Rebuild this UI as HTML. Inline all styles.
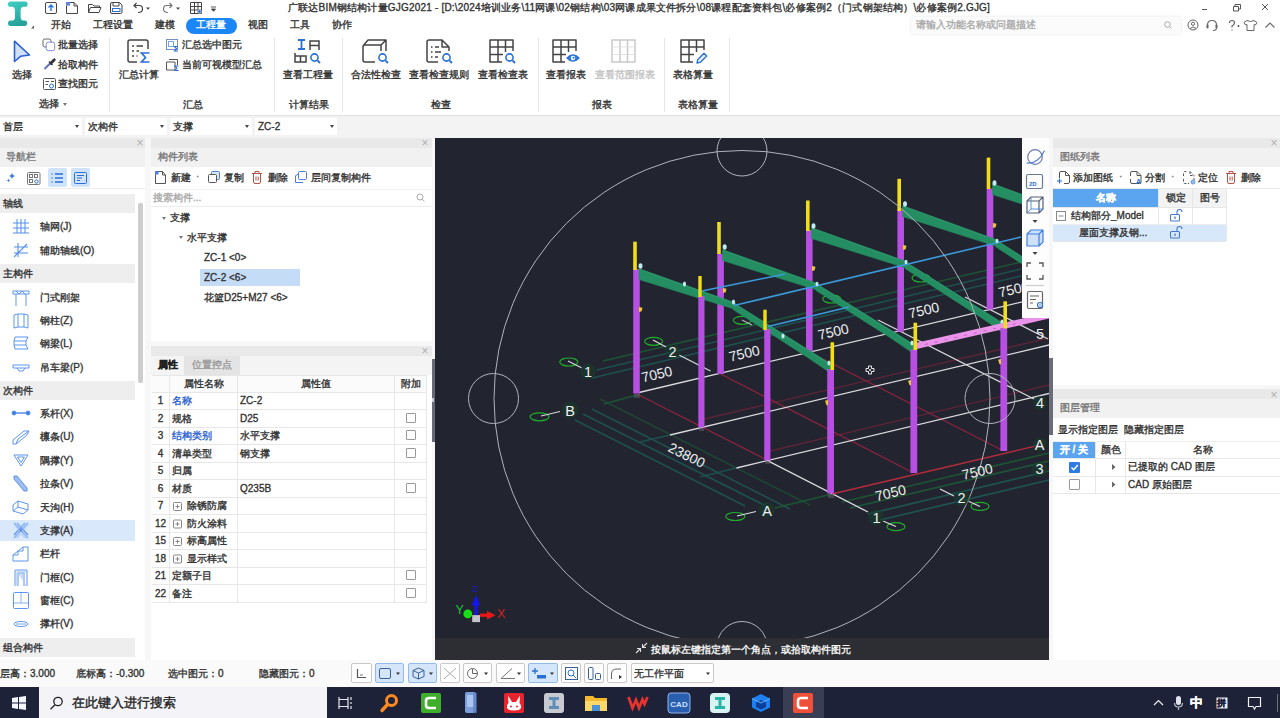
<!DOCTYPE html>
<html lang="zh">
<head>
<meta charset="utf-8">
<title>GJG2021</title>
<style>
html,body{margin:0;padding:0;}
body{width:1280px;height:718px;overflow:hidden;background:#fff;position:relative;font-family:"Liberation Sans",sans-serif;font-size:10px;line-height:12px;color:#333;}
div,span,svg,i,b{position:absolute;box-sizing:border-box;}
.t{white-space:nowrap;height:12px;line-height:12px;font-size:10px;color:#333;font-style:normal;font-weight:normal;-webkit-text-stroke:.35px currentColor;}
.g{color:#777;}
.c{text-align:center;}
.sep{width:1px;background:#e6e6e6;top:38px;height:74px;}
.dd{background:#fff;top:118px;height:17px;width:82px;}
.dd .t{left:3px;top:3px;}
.ar{border:2.5px solid transparent;border-top:3px solid #444;width:0;height:0;}
.hd{background:#e9e9e9;height:10px;}
.tt{background:#f1f1f1;height:19px;}
.x{font-size:12px;color:#b0b0b0;line-height:10px;height:10px;width:8px;text-align:center;}
.sh{left:0;width:135px;height:19px;background:#eeeeee;}
.sh .t{left:3px;top:4px;}
.vl{width:1px;background:#e7e7e7;}
.hl{height:1px;background:#e7e7e7;}
.cb{width:10px;height:10px;border:1px solid #999;background:#fff;border-radius:1px;}
.sb{top:663px;height:20px;border:1px solid #c9c9c9;background:#fff;border-radius:2px;}
.sb.on{background:#d5e6fa;border-color:#8fbcec;}
svg{overflow:visible;}
</style>
</head>
<body>
<!-- ===== TITLE / MENU / RIBBON ===== -->
<div id="top" style="left:0;top:0;width:1280px;height:116px;background:#fff;">
<!-- app logo -->
<svg style="left:6px;top:0" width="30" height="30" viewBox="6 0 30 30">
<defs><linearGradient id="lg" x1="0" y1="0" x2="0.300" y2="1"><stop offset="0" stop-color="#3fd0c4"/><stop offset="1" stop-color="#27a39c"/></linearGradient></defs>
<path d="M10.600 1.600 H25 Q27.600 1.600 27.600 4.200 Q27.600 6.800 25 6.800 H23 Q20.800 7.200 20.600 10 V17 Q20.800 20.200 23 20.600 H24.600 Q27.200 20.600 27.200 23.300 Q27.200 26 24.600 26 H10.600 Q8 26 8 23.300 Q8 20.600 10.600 20.600 H12.600 Q14.800 20.200 15 17 V10 Q14.800 7.200 12.600 6.800 H10.600 Q8 6.800 8 4.200 Q8 1.600 10.600 1.600 Z" fill="url(#lg)"/>
<path d="M31 28.500 L34 25.500 V28.500 Z" fill="#555"/>
</svg>
<!-- quick access -->
<svg style="left:44px;top:1px" width="180" height="14" viewBox="0 0 180 14" fill="none" stroke="#444" stroke-width="1">
<rect x="1.5" y="1.5" width="11" height="11" rx="1.5"/><path d="M7 10 V4 M4.5 6.5 L7 4 L9.5 6.5" stroke="#2a6fd6" stroke-width="1.4"/>
<path d="M22.500 4.500 V12.500 H33.500 V5 L30 1.500 H26 M30 1.500 V5 H33.500"/><rect x="22" y="1" width="4" height="3.600" fill="#5a84e0" stroke="none"/>
<path d="M44.500 11.500 V3.500 H48.500 L50 5 H55.500 V6.500 M44.500 11.500 L46.500 6.500 H57 L55 11.500 Z"/>
<path d="M66.500 3 Q66.500 1.500 68 1.500 H75.500 L78 4 V11 Q78 12.500 76.500 12.500 H68 Q66.500 12.500 66.500 11 Z M69 1.500 V5 H75 V1.500" /><rect x="68.500" y="7.500" width="7.500" height="3" stroke="#2a6fd6"/>
<path d="M90 4.500 H95.500 Q98.500 4.500 98.500 8 Q98.500 11.500 94 11.500 M92.500 2 L90 4.500 L92.500 7" stroke-width="1.200"/>
<path d="M102 6.500 L104 8.800 L106 6.500 Z" fill="#444" stroke="none"/>
<path d="M128 4.500 H122.500 Q119.500 4.500 119.500 8 Q119.500 11.500 124 11.500 M125.500 2 L128 4.500 L125.500 7" stroke="#777" stroke-width="1.200"/>
<path d="M132 6.500 L134 8.800 L136 6.500 Z" fill="#444" stroke="none"/>
<path d="M146.500 1.500 H157.500 V12.500 H146.500 Z M146.500 5.500 H157.500 M146.500 9 H157.500 M150.500 1.500 V12.500 M154 1.500 V12.500"/><circle cx="155.500" cy="10.500" r="1.800" fill="#2a6fd6" stroke="#fff" stroke-width=".6"/>
<path d="M167 6 H172 M167.500 8 L169.500 10.300 L171.500 8 Z" stroke-width=".9" fill="#444"/>
</svg>
<span class="t" style="left:288px;top:2px;color:#333;letter-spacing:.19px">广联达BIM钢结构计量GJG2021 - [D:\2024培训业务\11网课\02钢结构\03网课成果文件拆分\08课程配套资料包\必修案例2（门式钢架结构）\必修案例2.GJG]</span>
<!-- window controls -->
<svg style="left:1195px;top:0" width="85" height="16" viewBox="0 0 85 16" fill="none" stroke="#555" stroke-width="1">
<path d="M7 9.500 H12"/><path d="M38.500 6.500 H43.500 V11 H38.500 Z M40 6.500 V4.500 H45.500 V9 H43.500"/><path d="M67 4 L73 10 M73 4 L67 10"/>
</svg>
<!-- menu -->
<span class="t" style="left:51px;top:19px;font-size:10px">开始</span>
<span class="t" style="left:93px;top:19px;font-size:10px">工程设置</span>
<span class="t" style="left:155px;top:19px;font-size:10px">建模</span>
<div style="left:186px;top:18px;width:51px;height:16px;border-radius:8px;background:#1b86f5;"></div>
<span class="t" style="left:196px;top:19px;font-size:10px;color:#fff">工程量</span>
<span class="t" style="left:248px;top:19px;font-size:10px">视图</span>
<span class="t" style="left:290px;top:19px;font-size:10px">工具</span>
<span class="t" style="left:332px;top:19px;font-size:10px">协作</span>
<!-- search box -->
<div style="left:911px;top:17px;width:270px;height:17px;background:#fbfbfb;box-shadow:0 0 3px #e4e4e4;"></div>
<span class="t" style="left:916px;top:19px;color:#aaa;font-size:9.500px">请输入功能名称或问题描述</span>
<svg style="left:1162px;top:19px" width="118" height="14" viewBox="0 0 118 14" fill="none" stroke="#666" stroke-width="1">
<circle cx="5.500" cy="5.500" r="2.800" stroke="#aaa"/><path d="M7.500 7.500 L9.500 9.500" stroke="#aaa"/>
<circle cx="31" cy="6" r="5"/><circle cx="31" cy="4.800" r="1.600"/><path d="M28 9.500 Q31 6.500 34 9.500"/>
<path d="M45.500 8 V6 Q45.500 1.500 50 1.500 Q54.500 1.500 54.500 6 V8 M54.500 9 Q54.500 11.500 51 11.500" stroke-width="1.100"/><rect x="44.500" y="5.500" width="2" height="4" rx=".8" fill="#666" stroke="none"/><rect x="53.500" y="5.500" width="2" height="4" rx=".8" fill="#666" stroke="none"/>
<path d="M67.500 4 Q67.500 1.500 70 1.500 Q72.500 1.500 72.500 4 Q72.500 5.500 70 7 V8.500 M70 10.500 V11.500" stroke-width="1.200"/><circle cx="76.500" cy="7" r=".9" fill="#444" stroke="none"/>
<path d="M85 1.500 L82 3.500 L83.500 6 L85 5.500 V11.500 H92 V5.500 L93.500 6 L95 3.500 L92 1.500 Q88.500 3.500 85 1.500 Z"/>
<path d="M103.500 8.500 L108 4 L112.500 8.500" stroke-width="1.100"/>
</svg>
<!-- ribbon group 1: 选择 -->
<svg style="left:12px;top:40px" width="20" height="24" viewBox="0 0 20 24" fill="#cfe0f8" stroke="#2b62d9" stroke-width="1.600" stroke-linejoin="round"><path d="M2.500 1.200 L17.500 15 L8.500 16.300 L2.500 21.500 Z"/></svg>
<span class="t c" style="left:2px;top:69px;width:40px">选择</span>
<svg style="left:42px;top:38px" width="16" height="56" viewBox="0 0 16 56" fill="none" stroke="#555" stroke-width="1">
<rect x="1" y="1" width="8" height="8" rx="1.800" stroke="#666"/><rect x="4.200" y="4.200" width="8.500" height="8.500" rx="2.200" fill="#fff" stroke="#8088e0"/>
<path d="M2.500 31 L8 25.500" stroke="#5f74b8" stroke-width="2"/><path d="M7 23.500 L10.500 27" stroke="#333" stroke-width="1.500"/><path d="M8.800 25.200 L12.300 21.700" stroke="#333" stroke-width="2.800" stroke-linecap="round"/>
<rect x="1.500" y="40.500" width="12" height="11" rx="1"/><path d="M3.500 43.500 H7 M9 43.500 H12 M3.500 46.500 H6" /><circle cx="9.500" cy="48" r="2" stroke="#2a6fd6"/>
</svg>
<span class="t" style="left:58px;top:39px">批量选择</span>
<span class="t" style="left:58px;top:59px">拾取构件</span>
<span class="t" style="left:58px;top:78px">查找图元</span>
<span class="t" style="left:39px;top:98px">选择</span><i class="ar" style="left:63px;top:103px;border-top-color:#777"></i>
<div class="sep" style="left:109px"></div>
<!-- group 2: 汇总 -->
<svg style="left:126px;top:38px" width="28" height="28" viewBox="0 0 28 28" fill="none" stroke="#444" stroke-width="1.500">
<path d="M22 11 V4 Q22 2 20 2 H4 Q2 2 2 4 V22 Q2 24 4 24 H11"/><path d="M6 8 H8 M10.500 8 H17 M6 13 H8 M10.500 13 H13 M6 18 H8 M10.500 18 H11.500" stroke-width="1.300"/>
<path d="M23.500 15 H15.500 L19.500 19.500 L15.500 24 H23.500" stroke="#2a6fd6" stroke-width="1.700"/>
</svg>
<span class="t c" style="left:109px;top:69px;width:60px">汇总计算</span>
<svg style="left:165px;top:38px" width="16" height="34" viewBox="0 0 16 34" fill="none" stroke="#555" stroke-width="1">
<rect x="1.500" y="1.500" width="11" height="10" stroke="#7a8fb8"/><rect x="3.500" y="3.500" width="5" height="5" stroke="#7aa7e0"/><path d="M13 8.500 H9.500 L11.500 10.800 L9.500 13 H13" stroke="#2a6fd6" stroke-width="1.100"/>
<path d="M4 21.500 H12.500 V27 M1.500 24 H10 V32 H1.500 Z" /><path d="M13.500 28 H10 L12 30.300 L10 32.500 H13.500" stroke="#2a6fd6" stroke-width="1.100"/>
</svg>
<span class="t" style="left:182px;top:39px">汇总选中图元</span>
<span class="t" style="left:182px;top:59px">当前可视模型汇总</span>
<span class="t c" style="left:163px;top:99px;width:60px">汇总</span>
<div class="sep" style="left:274px"></div>
<!-- group 3: 计算结果 -->
<svg style="left:293px;top:38px" width="30" height="28" viewBox="0 0 30 28" fill="none" stroke="#444" stroke-width="1.500">
<path d="M5 2 H12 M5 11 H12 M8.500 2 V11" stroke="#2a6fd6" stroke-width="1.800"/><path d="M17 12 V3 H26 V12 M17 7.500 H26"/>
<path d="M2 15 V24 H13 V18 H2 M7.500 18 V24"/><circle cx="21.500" cy="19.500" r="3.600" stroke="#2a6fd6" stroke-width="1.600"/><path d="M24.500 22.500 L27 25" stroke="#2a6fd6" stroke-width="1.800"/>
</svg>
<span class="t c" style="left:278px;top:69px;width:60px">查看工程量</span>
<span class="t c" style="left:279px;top:99px;width:60px">计算结果</span>
<div class="sep" style="left:342px"></div>
<!-- group 4: 检查 -->
<svg style="left:361px;top:38px" width="30" height="28" viewBox="0 0 30 28" fill="none" stroke="#444" stroke-width="1.500" stroke-linejoin="round">
<path d="M14 24 H4 Q2 24 2 22 V9 Q2 7 4 7 H20 V13 M2 8 L7 2 H25 L20 7 M25 2 V13"/><circle cx="21.500" cy="19.500" r="3.600" stroke="#2a6fd6" stroke-width="1.600"/><path d="M24.500 22.500 L27 25" stroke="#2a6fd6" stroke-width="1.800"/>
</svg>
<span class="t c" style="left:346px;top:69px;width:60px">合法性检查</span>
<svg style="left:425px;top:38px" width="30" height="28" viewBox="0 0 30 28" fill="none" stroke="#444" stroke-width="1.500" stroke-linejoin="round">
<path d="M13 24 H4 Q2 24 2 22 V4 Q2 2 4 2 H17 L24 9 V13 M17 2 V9 H24"/><path d="M6 9 H7.500 M10 9 H14 M6 14 H7.500 M10 14 H16 M6 19 H7.500 M10 19 H13" stroke-width="1.300"/><circle cx="21.500" cy="19.500" r="3.600" stroke="#2a6fd6" stroke-width="1.600"/><path d="M24.500 22.500 L27 25" stroke="#2a6fd6" stroke-width="1.800"/>
</svg>
<span class="t c" style="left:404px;top:69px;width:70px">查看检查规则</span>
<svg style="left:488px;top:38px" width="30" height="28" viewBox="0 0 30 28" fill="none" stroke="#444" stroke-width="1.500" stroke-linejoin="round">
<path d="M14 24 H2 V2 H25 V13 M2 9 H25 M2 16.500 H15 M10 2 V24 M17.500 2 V14"/><circle cx="21.500" cy="19.500" r="3.600" stroke="#2a6fd6" stroke-width="1.600"/><path d="M24.500 22.500 L27 25" stroke="#2a6fd6" stroke-width="1.800"/>
</svg>
<span class="t c" style="left:473px;top:69px;width:60px">查看检查表</span>
<span class="t c" style="left:411px;top:99px;width:60px">检查</span>
<div class="sep" style="left:538px"></div>
<!-- group 5: 报表 -->
<svg style="left:551px;top:38px" width="32" height="28" viewBox="0 0 32 28" fill="none" stroke="#444" stroke-width="1.500" stroke-linejoin="round">
<path d="M14 24 H2 V2 H25 V13 M2 9 H25 M2 16.500 H15 M10 2 V24 M17.500 2 V14"/><path d="M16 20 Q22 13.500 28 20 Q22 26.500 16 20 Z" fill="#2a7be6" stroke="#2a6fd6" stroke-width="1.200"/><circle cx="22" cy="20" r="2.200" fill="#fff" stroke="none"/><circle cx="22.500" cy="19.700" r="1" fill="#2a6fd6" stroke="none"/>
</svg>
<span class="t c" style="left:536px;top:69px;width:60px">查看报表</span>
<svg style="left:610px;top:38px" width="30" height="28" viewBox="0 0 30 28" fill="none" stroke="#c9c9c9" stroke-width="1.500" stroke-linejoin="round">
<path d="M2 2 H25 V24 H2 Z M10 2 V24 M17.500 2 V24" /><path d="M2 9 H25 M2 16.500 H25" stroke-width=".8" stroke="#dcdcdc"/>
</svg>
<span class="t c" style="left:590px;top:69px;width:70px;color:#c4c4c4">查看范围报表</span>
<span class="t c" style="left:572px;top:99px;width:60px">报表</span>
<div class="sep" style="left:664px"></div>
<!-- group 6: 表格算量 -->
<svg style="left:679px;top:38px" width="30" height="28" viewBox="0 0 30 28" fill="none" stroke="#444" stroke-width="1.500" stroke-linejoin="round">
<path d="M14 24 H2 V2 H25 V12 M2 9 H25 M2 16.500 H15 M10 2 V24 M17.500 2 V14"/><path d="M18 25 L18.800 21.500 L25 15.300 L27.700 18 L21.500 24.200 Z" stroke="#2a6fd6" stroke-width="1.300" fill="#e3eefc"/>
</svg>
<span class="t c" style="left:663px;top:69px;width:60px">表格算量</span>
<span class="t c" style="left:668px;top:99px;width:60px">表格算量</span>
<div class="sep" style="left:729px"></div>
<div style="left:0;top:115px;width:1280px;height:1px;background:#e2e2e2"></div>
</div>
<!-- ===== SELECTOR BAR ===== -->
<div id="selbar" style="left:0;top:116px;width:1280px;height:22px;background:#f3f3f3;">
<div class="dd" style="left:0;top:2px"><span class="t">首层</span><i class="ar" style="left:75px;top:7px"></i></div>
<div class="dd" style="left:85px;top:2px"><span class="t">次构件</span><i class="ar" style="left:75px;top:7px"></i></div>
<div class="dd" style="left:170px;top:2px"><span class="t">支撑</span><i class="ar" style="left:75px;top:7px"></i></div>
<div class="dd" style="left:255px;top:2px"><span class="t">ZC-2</span><i class="ar" style="left:75px;top:7px"></i></div>
</div>
<div id="mainbg" style="left:0;top:138px;width:1280px;height:522px;background:#f7f7f7;"></div>
<!-- ===== NAV PANEL ===== -->
<div id="nav" style="left:0;top:138px;width:145px;height:522px;background:#fff;">
<div class="hd" style="left:0;top:0;width:145px"></div><span class="x" style="left:136px;top:0">×</span>
<div class="tt" style="left:0;top:10px;width:145px"></div><span class="t g" style="left:6px;top:13px">导航栏</span>
<!-- toolbar -->
<div style="left:48px;top:30px;width:19px;height:19px;background:#cfe3fa;border-radius:2px"></div>
<div style="left:71px;top:30px;width:19px;height:19px;background:#cfe3fa;border-radius:2px"></div>
<svg style="left:4px;top:31px" width="90" height="18" viewBox="0 0 90 18" fill="none" stroke="#4a6fb5" stroke-width="1">
<path d="M7 6 L8 8 L10 9 L8 10 L7 12 L6 10 L4 9 L6 8 Z M3.500 11.500 L4 13 L5.500 13.500 L4 14 L3.500 15.500 L3 14 L1.500 13.500 L3 13 Z" fill="#3b7be0" stroke="none" transform="translate(1,-2)"/>
<rect x="25.500" y="5.500" width="3" height="3" stroke="#666" stroke-width=".9"/><rect x="30.500" y="5.500" width="3" height="3" stroke="#666" stroke-width=".9"/><rect x="25.500" y="10.500" width="3" height="3" stroke="#666" stroke-width=".9"/><circle cx="32.500" cy="12.500" r="1.700" stroke="#2a6fd6"/><rect x="23.500" y="3.500" width="12.500" height="12" rx="1.200" stroke="#777"/>
<path d="M47.500 5 H48.500 M47.500 9 H48.500 M47.500 13 H48.500 M51 5 H59 M51 9 H59 M51 13 H59" stroke="#2a6fd6" stroke-width="1.500"/>
<rect x="70.500" y="3.500" width="12" height="11" rx="1" stroke="#2a6fd6"/><path d="M73 6.500 H80 M73 9 H78 M73 11.500 H76" stroke="#2a6fd6"/>
</svg>
<div style="left:0;top:50px;width:145px;height:1px;background:#ececec"></div>
<!-- sections -->
<div class="sh" style="top:56px"><span class="t">轴线</span></div>
<div class="sh" style="top:126px"><span class="t">主构件</span></div>
<div class="sh" style="top:243px"><span class="t">次构件</span></div>
<div class="sh" style="top:500px"><span class="t">组合构件</span></div>
<div style="left:0;top:382px;width:135px;height:21px;background:#d9e8fb"></div>
<!-- items -->
<span class="t" style="left:40px;top:83px">轴网(J)</span>
<span class="t" style="left:40px;top:107px">辅助轴线(O)</span>
<span class="t" style="left:40px;top:154px">门式刚架</span>
<span class="t" style="left:40px;top:177px">钢柱(Z)</span>
<span class="t" style="left:40px;top:200px">钢梁(L)</span>
<span class="t" style="left:40px;top:224px">吊车梁(P)</span>
<span class="t" style="left:40px;top:270px">系杆(X)</span>
<span class="t" style="left:40px;top:293px">檩条(U)</span>
<span class="t" style="left:40px;top:317px">隅撑(Y)</span>
<span class="t" style="left:40px;top:340px">拉条(V)</span>
<span class="t" style="left:40px;top:364px">天沟(H)</span>
<span class="t" style="left:40px;top:387px">支撑(A)</span>
<span class="t" style="left:40px;top:410px">栏杆</span>
<span class="t" style="left:40px;top:434px">门框(C)</span>
<span class="t" style="left:40px;top:457px">窗框(C)</span>
<span class="t" style="left:40px;top:480px">撑杆(V)</span>
<!-- item icons -->
<svg style="left:10px;top:77px" width="24" height="420" viewBox="0 0 24 420" fill="none" stroke="#558fec" stroke-width=".95">
<g><path d="M3 8 H19 M3 13 H19 M7 4 V18 M11 4 V18 M15 4 V18 M3 18 H19" stroke-width="1"/></g>
<g transform="translate(0,24)"><path d="M4 8 H18 M4 14 H18 M8 4 V18 M4 18 L17 5" stroke-width="1.100"/></g>
<g transform="translate(0,71)"><path d="M3 5 H19 M3 8 H19 M3 5 V8 M19 5 V8 M6 8 V20 M16 8 V20 M6 5 L9 8 L12 5 L15 8"/></g>
<g transform="translate(0,94)"><path d="M4 6 V19 M8 5 V18 M14 5 V18 M18 6 V19 M4 6 L8 5 M14 5 L18 6 M4 19 L8 18 M14 18 L18 19 M8 5 H14 M8 18 H14"/></g>
<g transform="translate(0,117)"><path d="M5 5 H18 L16 9 H4 Z M4 9 V13 M16 9 V13 M4 13 H16 L18 17 H5 Z" /></g>
<g transform="translate(0,141)"><path d="M3 9 H19 V12 H3 Z M7 12 L9 15 H13 L15 12" /></g>
<g transform="translate(0,187)"><path d="M5 11 H17" stroke-width="1.500"/><circle cx="4" cy="11" r="2" fill="#3b7be0"/><circle cx="18" cy="11" r="2" fill="#3b7be0"/></g>
<g transform="translate(0,210)"><path d="M3 15 L14 6 H19 L17 10 L6 19 H3 Z M6 19 L8 14 L19 6"/></g>
<g transform="translate(0,234)"><path d="M4 6 H18 L11 17 Z M7.500 8 H14.500 L11 13.500 Z" /></g>
<g transform="translate(0,257)"><path d="M4 4 L7 4 L17 16 L17 19 L14 19 L4 7 Z" fill="#9dbff0"/></g>
<g transform="translate(0,281)"><path d="M3 9 L8 5 L18 8 V14 L13 18 L3 15 Z M8 5 V11 L3 15 M8 11 L18 14" /></g>
<g transform="translate(0,304)"><path d="M4 4 L18 19 M18 4 L4 19 M7 4 L18 16 M15 4 L4 16" stroke-width="1.200"/><path d="M4 4 L8 4 L18 17 L18 19 L14 19 L4 6 Z M18 4 L14 4 L4 17 L4 19 L8 19 L18 6 Z" fill="#a9c8f3" stroke="none" opacity=".7"/></g>
<g transform="translate(0,327)"><path d="M3 19 V13 H8 V9 H13 V5 H18 V19 Z M3 13 L8 9 M8 9 L13 5"/></g>
<g transform="translate(0,351)"><path d="M5 20 V4 H17 V20 M8 20 V7 H14 V20" /><path d="M5 4 H17 V7 H14 V20 H17 M5 4 V20 H8 V7" fill="#a9c8f3" stroke="none" opacity=".6"/></g>
<g transform="translate(0,374)"><rect x="3.500" y="3.500" width="15" height="16" rx="1"/><path d="M3.500 14 H18.500 M11 3.500 V14" stroke-width=".7"/></g>
<g transform="translate(0,397)"><ellipse cx="11" cy="12" rx="7" ry="2.500"/><path d="M6 12 H16" stroke-width=".8"/></g>
</svg>
<!-- scrollbar -->
<div style="left:138px;top:65px;width:5px;height:180px;background:#cdcdcd;border-radius:2px"></div>
</div>
<!-- ===== COMPONENT LIST ===== -->
<div id="clist" style="left:151px;top:138px;width:281px;height:203px;background:#fff;">
<div class="hd" style="left:0;top:0;width:281px"></div><span class="x" style="left:270px;top:0">×</span>
<div class="tt" style="left:0;top:10px;width:281px"></div><span class="t g" style="left:7px;top:13px">构件列表</span>
<svg style="left:3px;top:32px" width="160" height="16" viewBox="0 0 160 16" fill="none" stroke="#555" stroke-width="1">
<path d="M1.500 4 V13.500 H11.500 V5 L8.500 1.500 H4 M8.500 1.500 V5 H11.500"/><rect x="1" y="1" width="3.500" height="3.500" fill="#4a7fe0" stroke="none"/>
<rect x="57.500" y="1.500" width="8" height="8" rx="1" stroke="#4a7fe0" fill="#dbe8fb"/><rect x="54.500" y="4.500" width="8" height="8" rx="1" fill="#fff"/>
<path d="M98 3.500 H108 M101 3.500 V1.500 H105 V3.500 M99.500 3.500 V12 Q99.500 13.500 101 13.500 H105 Q106.500 13.500 106.500 12 V3.500" stroke="#b5524a"/><path d="M102 6.500 V10.500 M104.200 6.500 V10.500" stroke="#b5524a"/>
<rect x="144.500" y="1.500" width="8" height="8" rx="1" stroke="#4a7fe0"/><path d="M141.500 5.500 V12.500 H149" stroke="#4a7fe0"/><path d="M141.500 6 L144 4" stroke="#4a7fe0"/>
</svg>
<span class="t" style="left:20px;top:34px">新建</span><span class="t" style="left:45px;top:33px;color:#777">·</span>
<span class="t" style="left:73px;top:34px">复制</span>
<span class="t" style="left:117px;top:34px">删除</span>
<span class="t" style="left:160px;top:34px">层间复制构件</span>
<div class="hl" style="left:0;top:51px;width:281px;background:#f0f0f0"></div>
<span class="t" style="left:2px;top:54px;color:#aaa">搜索构件...</span>
<svg style="left:264px;top:54px" width="12" height="12" viewBox="0 0 12 12" fill="none" stroke="#aaa"><circle cx="5" cy="5" r="3"/><path d="M7.200 7.200 L9.500 9.500"/></svg>
<div class="hl" style="left:0;top:68px;width:281px;background:#ececec"></div>
<i class="ar" style="left:11px;top:79px;border-top-color:#777"></i><span class="t" style="left:19px;top:74px">支撑</span>
<i class="ar" style="left:28px;top:98px;border-top-color:#777"></i><span class="t" style="left:36px;top:94px">水平支撑</span>
<span class="t" style="left:53px;top:114px">ZC-1 &lt;0&gt;</span>
<div style="left:49px;top:131px;width:100px;height:17px;background:#c5dcf7"></div>
<span class="t" style="left:53px;top:134px">ZC-2 &lt;6&gt;</span>
<span class="t" style="left:53px;top:154px">花篮D25+M27 &lt;6&gt;</span>
</div>
<!-- ===== PROPERTIES ===== -->
<div id="props" style="left:151px;top:346px;width:281px;height:314px;background:#fff;">
<div class="hd" style="left:0;top:0;width:281px"></div><span class="x" style="left:270px;top:0">×</span>
<div class="tt" style="left:0;top:10px;width:281px;height:19px;background:#f4f4f4"></div>
<div style="left:33px;top:10px;width:56px;height:19px;background:#e4e4e4"></div>
<span class="t" style="left:7px;top:13px;font-weight:bold;color:#222">属性</span>
<span class="t" style="left:41px;top:13px;color:#999">位置控点</span>
<!-- table -->
<div style="left:1px;top:29px;width:274px;height:17px;background:#fbfbfb"></div>
<div class="hl" style="left:1px;top:29px;width:274px"></div>
<div class="hl" style="left:1px;top:46px;width:274px"></div>
<div class="hl" style="left:1px;top:63px;width:274px"></div>
<div class="hl" style="left:1px;top:81px;width:274px"></div>
<div class="hl" style="left:1px;top:98px;width:274px"></div>
<div class="hl" style="left:1px;top:116px;width:274px"></div>
<div class="hl" style="left:1px;top:133px;width:274px"></div>
<div class="hl" style="left:1px;top:151px;width:274px"></div>
<div class="hl" style="left:1px;top:168px;width:274px"></div>
<div class="hl" style="left:1px;top:186px;width:274px"></div>
<div class="hl" style="left:1px;top:203px;width:274px"></div>
<div class="hl" style="left:1px;top:221px;width:274px"></div>
<div class="hl" style="left:1px;top:238px;width:274px"></div>
<div class="hl" style="left:1px;top:256px;width:274px"></div>
<div class="vl" style="left:18px;top:29px;height:228px"></div>
<div class="vl" style="left:86px;top:29px;height:228px"></div>
<div class="vl" style="left:243px;top:29px;height:228px"></div>
<div class="vl" style="left:275px;top:29px;height:228px"></div>
<span class="t c" style="left:19px;top:32px;width:67px">属性名称</span>
<span class="t c" style="left:87px;top:32px;width:156px">属性值</span>
<span class="t c" style="left:244px;top:32px;width:31px">附加</span>
<span class="t c" style="left:1px;top:49px;width:17px">1</span><span class="t" style="left:21px;top:49px;color:#2a5fd0">名称</span><span class="t" style="left:89px;top:49px">ZC-2</span>
<span class="t c" style="left:1px;top:67px;width:17px">2</span><span class="t" style="left:21px;top:67px">规格</span><span class="t" style="left:89px;top:67px">D25</span><div class="cb" style="left:255px;top:67px"></div>
<span class="t c" style="left:1px;top:84px;width:17px">3</span><span class="t" style="left:21px;top:84px;color:#2a5fd0">结构类别</span><span class="t" style="left:89px;top:84px">水平支撑</span><div class="cb" style="left:255px;top:84px"></div>
<span class="t c" style="left:1px;top:102px;width:17px">4</span><span class="t" style="left:21px;top:102px">清单类型</span><span class="t" style="left:89px;top:102px">钢支撑</span><div class="cb" style="left:255px;top:102px"></div>
<span class="t c" style="left:1px;top:119px;width:17px">5</span><span class="t" style="left:21px;top:119px">归属</span>
<span class="t c" style="left:1px;top:137px;width:17px">6</span><span class="t" style="left:21px;top:137px">材质</span><span class="t" style="left:89px;top:137px">Q235B</span><div class="cb" style="left:255px;top:137px"></div>
<span class="t c" style="left:1px;top:154px;width:17px">7</span><span class="t" style="left:36px;top:154px">除锈防腐</span>
<span class="t c" style="left:1px;top:172px;width:17px">12</span><span class="t" style="left:36px;top:172px">防火涂料</span>
<span class="t c" style="left:1px;top:189px;width:17px">15</span><span class="t" style="left:36px;top:189px">标高属性</span>
<span class="t c" style="left:1px;top:207px;width:17px">18</span><span class="t" style="left:36px;top:207px">显示样式</span>
<span class="t c" style="left:1px;top:224px;width:17px">21</span><span class="t" style="left:21px;top:224px">定额子目</span><div class="cb" style="left:255px;top:224px"></div>
<span class="t c" style="left:1px;top:242px;width:17px">22</span><span class="t" style="left:21px;top:242px">备注</span><div class="cb" style="left:255px;top:242px"></div>
<svg style="left:21px;top:155px" width="12" height="64" viewBox="0 0 12 64" fill="none" stroke="#888" stroke-width="1">
<rect x="1.500" y="1.500" width="8" height="8" rx="1"/><path d="M3.500 5.500 H7.500 M5.500 3.500 V7.500"/>
<rect x="1.500" y="19" width="8" height="8" rx="1"/><path d="M3.500 23 H7.500 M5.500 21 V25"/>
<rect x="1.500" y="36.500" width="8" height="8" rx="1"/><path d="M3.500 40.500 H7.500 M5.500 38.500 V42.500"/>
<rect x="1.500" y="54" width="8" height="8" rx="1"/><path d="M3.500 58 H7.500 M5.500 56 V60"/>
</svg>
</div>
<!-- splitter handle -->
<div style="left:431.500px;top:359px;width:3.500px;height:83px;background:#666a75"></div><div style="left:432px;top:398px;width:2px;height:4px;background:#c8cad2"></div>
<!-- ===== VIEWPORT ===== -->
<div id="vp" style="left:435px;top:138px;width:614px;height:522px;background:#22252f;overflow:hidden;">
<svg style="left:0;top:0" width="614" height="522" viewBox="435 138 614 522" fill="none" font-family="Liberation Sans, sans-serif">
<!-- back dimension lines (beyond axis B) -->
<g stroke="#1d6a63" stroke-width="1.600" opacity=".62">
<path d="M597 370 L1021 269"/><path d="M592 378 L1021 276"/><path d="M603 361 L1021 262" stroke="#1c6e3c"/>
</g>
<!-- left dimension lines (beyond axis 1) -->
<g stroke="#1d6a63" stroke-width="1.600" opacity=".62">
<path d="M583 414 L770 508"/><path d="M592 409 L790 509" /><path d="M575 420 L745 506"/><path d="M604 404 L640 394" stroke="#1c6e3c"/><path d="M600 399 L810 505" stroke="#1c6e3c" opacity=".7"/>
<path d="M670 435 L640 442 M736 468 L700 477"/>
</g>
<!-- front dimension lines (beyond axis A) -->
<g stroke="#1d6a63" stroke-width="1.700" opacity=".68">
<path d="M775 508 L832 494" stroke="#1c6a33"/><path d="M842 502 L1049 453" stroke="#1c6a33"/><path d="M850 508 L1049 461" stroke="#1c6e3c"/>
<path d="M868 514 L1049 471"/><path d="M880 520 L1049 480"/>
</g>
<!-- dark red ground members -->
<g stroke="#8c2340" stroke-width="1.300">
<path d="M637 394 L767 460"/><path d="M720.600 374 L913.800 473"/><path d="M809.300 352 L1003.800 451"/>
<path d="M700 420 L1049 338" opacity=".55"/><path d="M766 452 L1049 385" opacity=".55"/>
</g>
<!-- white grid -->
<g stroke="#d9d9de" stroke-width="1.300">
<path d="M639 392.500 L1049 295.500"/><path d="M670 435 L1049 345"/><path d="M736.400 468 L1049 393.500"/>
<path d="M767 460.400 L868 512"/><path d="M878 320 L1034 399"/><path d="M965 297 L1048 339"/>
<path d="M679 355 L710.500 371"/><path d="M940 489 L954 496"/>
</g>
<path d="M832 494 L1040 445" stroke="#b52b3c" stroke-width="1.350"/>
<!-- back axis bubbles -->
<g stroke="#1fae2c" stroke-width="1.200"><ellipse cx="568.800" cy="362" rx="9" ry="4"/><ellipse cx="653.600" cy="341.300" rx="9" ry="4"/><ellipse cx="742.300" cy="320.300" rx="9" ry="4"/><ellipse cx="831.700" cy="299" rx="9" ry="4"/><ellipse cx="921" cy="278" rx="9" ry="4"/><ellipse cx="539.500" cy="416.800" rx="9.500" ry="4"/><ellipse cx="735.300" cy="516.500" rx="9.500" ry="4"/><ellipse cx="896" cy="526.700" rx="9" ry="4"/><ellipse cx="980" cy="506.400" rx="9" ry="4"/></g>
<g stroke="#d9d9de" stroke-width="1.200"><path d="M568 361 L582 368"/><path d="M653 340 L666 347"/><path d="M541 416 L560 411.500"/><path d="M737 516 L756 511.500"/><path d="M883 521 L896 526.500"/><path d="M968 501 L980 506.500"/><path d="M742 320 L752 325 M832 299 L842 304 M921 278 L931 283" opacity=".8"/></g>
<!-- B-row columns -->
<g stroke="#b74fe3" stroke-width="6.600">
<path d="M636.500 269 V393.500"/><path d="M720.600 254 V374"/><path d="M809.300 230 V352"/><path d="M900.700 210 V331.700"/><path d="M990 188.500 V309.500"/>
</g>
<g stroke="#f2de18" stroke-width="3.600">
<path d="M635 241.700 V270"/><path d="M719 222 V254"/><path d="M807.800 200.500 V231"/><path d="M899.200 178.800 V211"/><path d="M988.500 157.600 V189"/>
</g>
<!-- roof beams -->
<g fill="#248d61" stroke="#248d61" stroke-width=".6" stroke-linejoin="round">
<path d="M992.5 183.7 L1088.0 218.7 L1088.0 225.3 L992.5 194.5 Z"/><path d="M1086.0 218.6 L1184.0 280.8 L1184.0 290.2 L1159.0 273.2 L1086.0 225.5 Z"/>
<path d="M902.5 205.7 L998.0 240.2 L998.0 246.8 L902.5 216.5 Z"/><path d="M996.0 240.1 L1094.0 302.3 L1094.0 311.7 L1069.0 294.7 L996.0 247.0 Z"/>
<path d="M811.5 227.7 L907.0 261.7 L907.0 268.3 L811.5 238.5 Z"/><path d="M905.0 261.6 L1004.0 323.8 L1004.0 333.2 L979.0 316.2 L905.0 268.5 Z"/>
<path d="M722.5 249.7 L818.0 283.7 L818.0 290.3 L722.5 260.5 Z"/><path d="M816.0 283.6 L914.5 344.8 L914.5 354.2 L889.5 337.2 L816.0 290.5 Z"/>
<path d="M639.0 268.7 L735.0 302.7 L735.0 309.3 L639.0 279.5 Z"/><path d="M733.0 302.6 L831.5 364.3 L831.5 373.7 L806.5 356.7 L733.0 309.5 Z"/>
</g>
<g stroke="#35a877" stroke-width="1" opacity=".55"><path d="M639.5 269.2 L734.0 303.0 L830.5 364.7"/><path d="M723.0 250.2 L817.0 284.0 L913.5 345.2"/><path d="M812.0 228.2 L906.0 262.0 L1003.0 324.2"/><path d="M903.0 206.2 L997.0 240.5 L1093.0 302.7"/><path d="M993.0 184.2 L1087.0 219.0 L1183.0 281.2"/></g>
<!-- blue ties -->
<g stroke="#3a9bdc" stroke-width="1.600">
<path d="M734 305.500 L1021 237"/><path d="M702 291 L785 274"/><path d="M768 326.500 L849 307"/>
</g>
<!-- end caps -->
<g fill="#bfeaf0"><ellipse cx="640.500" cy="266" rx="2" ry="2.800"/><ellipse cx="724.700" cy="247" rx="2" ry="2.800"/><ellipse cx="813.500" cy="226" rx="2" ry="2.800"/><ellipse cx="905" cy="204" rx="2" ry="2.800"/><ellipse cx="994.500" cy="183" rx="2" ry="2.800"/>
<ellipse cx="684.500" cy="284" rx="1.600" ry="2.500"/><ellipse cx="733.500" cy="302" rx="1.600" ry="2.500"/><ellipse cx="783" cy="336" rx="1.600" ry="2.500"/><ellipse cx="817" cy="284" rx="1.500" ry="2.200"/><ellipse cx="906" cy="262" rx="1.500" ry="2.200"/><ellipse cx="997" cy="241" rx="1.500" ry="2.200"/>
<ellipse cx="829" cy="363" rx="1.600" ry="2.600"/><ellipse cx="912" cy="343" rx="1.600" ry="2.600"/><ellipse cx="1002" cy="322" rx="1.600" ry="2.600"/></g>
<!-- wind columns -->
<g stroke="#b74fe3" stroke-width="6.200"><path d="M701.400 296 V427.500"/><path d="M767.300 329 V460.400"/></g>
<g stroke="#f2de18" stroke-width="3.400"><path d="M700 276 V297"/><path d="M765 309.700 V330"/></g>
<!-- pink selected beam -->
<path d="M916 346 L1049 315.500" stroke="#ea93ea" stroke-width="6"/>
<path d="M925 344.500 L1021 322.500" stroke="#c863c8" stroke-width="1" stroke-dasharray="3 7"/>
<!-- A-row columns -->
<g stroke="#b74fe3" stroke-width="6.800"><path d="M830.600 369 V493.500"/><path d="M913.800 349.500 V473"/><path d="M1003.800 328 V451"/></g>
<g stroke="#f2de18" stroke-width="3.600"><path d="M832.300 342.300 V370"/><path d="M915.300 322.700 V350"/><path d="M1005.200 301.300 V328.500"/></g>
<!-- yellow markers -->
<g fill="#e8c53a"><path d="M639 307 l3.5 .7 l-.8 3.6 l-2.7 .7z"/><path d="M723 288 l3.5 .7 l-.8 3.6 l-2.7 .7z"/><path d="M812 266 l3.5 .7 l-.8 3.6 l-2.7 .7z"/><path d="M903 245 l3.5 .7 l-.8 3.6 l-2.7 .7z"/><path d="M993 223 l3.5 .7 l-.8 3.6 l-2.7 .7z"/>
<path d="M828 400 l-3 .8 l1.500 4.500 l1.500 0z"/><path d="M911 380 l-3 .8 l1.500 4.500 l1.500 0z"/><path d="M1001 359 l-3 .8 l1.500 4.500 l1.500 0z"/></g>
<!-- column feet -->
<g fill="#6b6e78" opacity=".45"><rect x="634" y="394" width="6" height="4"/><rect x="828" y="494" width="6" height="4"/><rect x="699" y="428" width="5" height="3"/><rect x="765" y="461" width="5" height="3"/></g>
<!-- circles -->
<g stroke="#b0b2bc" stroke-width="1">
<circle cx="742" cy="398.500" r="248"/><circle cx="493.500" cy="398.500" r="25"/><circle cx="742" cy="151" r="25"/><circle cx="990" cy="398.500" r="25"/><circle cx="742" cy="646.500" r="25"/>
</g>
<!-- labels -->
<g fill="#173f2b" opacity=".55"><circle cx="588" cy="371.500" r="8"/><circle cx="672.600" cy="351.400" r="8"/><circle cx="570" cy="410" r="8.500"/><circle cx="767" cy="510" r="8"/><circle cx="876.500" cy="517.500" r="8"/><circle cx="961.600" cy="498" r="8"/><circle cx="1039.500" cy="469" r="8"/><circle cx="1039.500" cy="444.500" r="7"/><circle cx="1040" cy="403" r="7"/></g>
<g fill="#f0f0f2" font-size="14.500" text-anchor="middle">
<text x="588" y="376.500">1</text><text x="672.600" y="356.500">2</text><text x="570" y="415.500">B</text><text x="767" y="515.500">A</text>
<text x="876.500" y="522.500">1</text><text x="961.600" y="503">2</text><text x="1039.500" y="474">3</text><text x="1039.500" y="449.500">A</text><text x="1040" y="408">4</text><text x="1040" y="339">5</text>
</g>
<g fill="#eeeef0" font-size="14" text-anchor="middle">
<text transform="translate(658,379) rotate(-13.400)">7050</text>
<text transform="translate(745.400,358.200) rotate(-13.400)">7500</text>
<text transform="translate(834.500,336.500) rotate(-13.400)">7500</text>
<text transform="translate(925,315) rotate(-13.400)">7500</text>
<text transform="translate(1015,294) rotate(-13.400)">7500</text>
<text transform="translate(891.700,497.600) rotate(-13.400)">7050</text>
<text transform="translate(978.500,476.400) rotate(-13.400)">7500</text>
<text transform="translate(684.500,459.500) rotate(26.800)">23800</text>
</g>
<!-- cursor -->
<g stroke="#e8e8ea" stroke-width="1" transform="translate(870,370)"><path d="M-4 -1.500 H-1.500 V-4 H1.500 V-1.500 H4 V1.500 H1.500 V4 H-1.500 V1.500 H-4 Z"/><path d="M-1 0 H1 M0 -1 V1"/></g>
<!-- gizmo -->
<g transform="translate(476,618.500)">
<path d="M0 -3 V-16" stroke="#1414ee" stroke-width="3.200"/><path d="M-4 -13 L0 -24 L4 -13 Z" fill="#1414ee"/>
<text x="-3.500" y="-27" font-size="9" fill="#1a1ac0" font-weight="bold" opacity=".8">Z</text>
<path d="M4 -3.300 H13" stroke="#e81818" stroke-width="3.200"/><path d="M11 -7.500 L19.500 -3.300 L11 1 Z" fill="#e81818"/>
<circle cx="-8.200" cy="-4.600" r="4.400" fill="#18e018"/>
<rect x="-3.800" y="-3.400" width="7.800" height="7" fill="#c4c4cc"/>
<text x="-20.500" y="-4.500" font-size="12.500" fill="#22c03a">Y</text>
<text x="21" y="-1" font-size="12.500" fill="#d42020">X</text>
</g>
<!-- message bar -->
<rect x="435" y="638" width="614" height="22" fill="#2e2f33" opacity=".96"/>
<g stroke="#e0e0e0" stroke-width="1.100"><path d="M636 653 L640.500 648.500 M637 648.500 H640.500 V652"/><path d="M647 643 L642.500 647.500 M646 647.500 H642.500 V644"/></g>
<text x="651" y="653" font-size="10" font-weight="bold" fill="#f2f2f2">按鼠标左键指定第一个角点，或拾取构件图元</text>
</svg>
</div>
<!-- right view toolbar -->
<div id="vtb" style="left:1022px;top:138px;width:27px;height:180px;background:#fdfdfd;">
<svg style="left:-1px;top:0" width="28" height="177" viewBox="0 0 28 177" fill="none" stroke="#4a78c8" stroke-width="1.200">
<circle cx="14" cy="19" r="7.300" stroke="#7078b0"/><path d="M5.500 25 Q17 26.500 23.500 12.500" stroke="#4a78d8" stroke-width="1.100"/>
<rect x="5.500" y="36.500" width="16" height="14" rx="1.500" stroke="#6a7a9a"/><text x="8" y="48" font-size="6" fill="#2a6fd6" stroke="none" font-family="Liberation Sans, sans-serif" font-weight="bold">2D</text>
<path d="M6 63 H18 V75 H6 Z M6 63 L10 59 H22 V71 L18 75 M18 63 L22 59" stroke="#55627a"/><path d="M10 59 V71 H22 M10 71 L6 75" stroke="#4a88e0" stroke-width=".9"/>
<path d="M11.500 82 L14 85 L16.500 82 Z" fill="#444" stroke="none"/>
<path d="M6 96 H18 V108 H6 Z M6 96 L10 92 H22 V104 L18 108 M18 96 L22 92" stroke="#3f7fe0" fill="#cfe1fa"/>
<path d="M11.500 114 L14 117 L16.500 114 Z" fill="#444" stroke="none"/>
<path d="M6 129 V125 H10 M18 125 H22 V129 M22 137 V141 H18 M10 141 H6 V137" stroke="#555" stroke-width="1.300"/>
<path d="M5 147.500 H23" stroke="#ccc"/>
<rect x="6.500" y="153.500" width="15" height="17" rx="1.500" stroke="#666"/><path d="M9 158 H18 M9 161.500 H15 M9 165 H12" stroke="#666"/><circle cx="19" cy="167" r="2.500" stroke="#2a6fd6" fill="#fff"/><circle cx="19" cy="167" r=".8" fill="#2a6fd6" stroke="none"/>
</svg>
</div>
<!-- ===== DRAWING LIST PANEL ===== -->
<div style="left:1049px;top:358px;width:3.500px;height:77px;background:#6a6d78"></div>
<div id="dlist" style="left:1053px;top:138px;width:227px;height:247px;background:#fff;">
<div class="hd" style="left:0;top:0;width:227px"></div><span class="x" style="left:217px;top:0">×</span>
<div class="tt" style="left:0;top:10px;width:227px"></div><span class="t g" style="left:7px;top:13px">图纸列表</span>
<svg style="left:3px;top:32px" width="190" height="16" viewBox="0 0 190 16" fill="none" stroke="#555" stroke-width="1">
<path d="M3.500 8 V3 Q3.500 1.500 5 1.500 H9.500 L13.500 5.500 V12 Q13.500 13.500 12 13.500 H8 M9.500 1.500 V5.500 H13.500"/><path d="M1 11 H6 M3.500 8.500 V13.500" stroke="#2a6fd6" stroke-width="1.200"/>
<path d="M74.500 6 V3 Q74.500 1.500 76 1.500 H81 L85 5.500 V12 Q85 13.500 83.500 13.500 H76 Q74.500 13.500 74.500 12 V9 M81 1.500 V5.500 H85" /><text x="80" y="14" font-size="7" font-weight="bold" fill="#2a6fd6" stroke="none" font-family="Liberation Sans, sans-serif">A</text>
<path d="M127.500 9 V12 Q127.500 13.500 129 13.500 H133 M127.500 6 V3 Q127.500 1.500 129 1.500 H131 M134 1.500 L138 5.500 V10 M134 1.500 V5.500 H138" stroke-dasharray="2.500 1.500"/><circle cx="137" cy="12" r="2" fill="#9bbcf0" stroke="#6a98e0"/>
<path d="M170 3.500 H180 M173 3.500 V1.500 H177 V3.500 M171.500 3.500 V12 Q171.500 13.500 173 13.500 H177 Q178.500 13.500 178.500 12 V3.500" stroke="#b5524a"/><path d="M174 6.500 V10.500 M176.200 6.500 V10.500" stroke="#b5524a"/>
</svg>
<span class="t" style="left:20px;top:34px">添加图纸</span><span class="t" style="left:66px;top:33px;color:#777">·</span>
<span class="t" style="left:92px;top:34px">分割</span><span class="t" style="left:118px;top:33px;color:#777">·</span>
<span class="t" style="left:145px;top:34px">定位</span>
<span class="t" style="left:188px;top:34px">删除</span>
<div class="hl" style="left:0;top:50px;width:227px"></div>
<!-- table -->
<div style="left:0;top:51px;width:105px;height:18px;background:#5ba4ef"></div>
<div style="left:106px;top:51px;width:33px;height:18px;background:#f3f3f3"></div>
<div style="left:140px;top:51px;width:33px;height:18px;background:#f3f3f3"></div>
<span class="t c" style="left:0;top:54px;width:105px;color:#fff;font-weight:bold">名称</span>
<span class="t c" style="left:106px;top:54px;width:33px">锁定</span>
<span class="t c" style="left:140px;top:54px;width:33px">图号</span>
<div style="left:0;top:86px;width:173px;height:17px;background:#d7e8fb"></div>
<div class="vl" style="left:105px;top:51px;height:35px"></div><div class="vl" style="left:139px;top:51px;height:35px"></div><div class="vl" style="left:173px;top:51px;height:52px"></div>
<div class="hl" style="left:0;top:69px;width:173px"></div><div class="hl" style="left:0;top:86px;width:173px;background:#eee"></div><div class="hl" style="left:0;top:103px;width:173px"></div>
<svg style="left:3px;top:73px" width="10" height="10" viewBox="0 0 10 10" fill="none" stroke="#888"><rect x=".5" y=".5" width="9" height="9"/><path d="M2.500 5 H7.500"/></svg>
<span class="t" style="left:18px;top:72px">结构部分_Model</span>
<span class="t" style="left:26px;top:89px">屋面支撑及钢...</span>
<svg style="left:115px;top:70px" width="16" height="32" viewBox="0 0 16 32" fill="none" stroke="#4a78c8" stroke-width="1.100">
<rect x="2.500" y="6.500" width="9" height="6.500" rx="1"/><path d="M7 8.500 V11" stroke-width="1.300"/><path d="M9 6.500 V4 Q9 1.500 11.500 1.500 Q14 1.500 14 4"/>
<rect x="2.500" y="23.500" width="9" height="6.500" rx="1"/><path d="M7 25.500 V28" stroke-width="1.300"/><path d="M9 23.500 V21 Q9 18.500 11.500 18.500 Q14 18.500 14 21"/>
</svg>
</div>
<!-- ===== LAYER PANEL ===== -->
<div id="layers" style="left:1053px;top:389px;width:227px;height:271px;background:#fff;">
<div class="hd" style="left:0;top:0;width:227px"></div><span class="x" style="left:217px;top:1px">×</span>
<div class="tt" style="left:0;top:10px;width:227px"></div><span class="t g" style="left:7px;top:13px">图层管理</span>
<span class="t" style="left:5px;top:35px">显示指定图层</span><span class="t" style="left:71px;top:35px">隐藏指定图层</span>
<div style="left:0;top:52px;width:42px;height:17px;background:#5ba4ef"></div>
<span class="t c" style="left:0;top:55px;width:42px;color:#fff;font-weight:bold">开 / 关</span>
<span class="t c" style="left:43px;top:55px;width:29px">颜色</span>
<span class="t c" style="left:73px;top:55px;width:154px">名称</span>
<div class="vl" style="left:42px;top:52px;height:53px"></div><div class="vl" style="left:72px;top:52px;height:53px"></div>
<div class="hl" style="left:0;top:52px;width:227px;background:#eee"></div><div class="hl" style="left:0;top:69px;width:227px"></div><div class="hl" style="left:0;top:87px;width:227px"></div><div class="hl" style="left:0;top:104px;width:227px"></div>
<div style="left:16px;top:73px;width:11px;height:11px;background:#2f7be6;border-radius:1px"></div>
<svg style="left:16px;top:73px" width="11" height="11" viewBox="0 0 11 11" fill="none" stroke="#fff" stroke-width="1.400"><path d="M2.500 5.500 L4.700 7.800 L8.800 3"/></svg>
<div class="cb" style="left:16px;top:90px;width:11px;height:11px"></div>
<svg style="left:58px;top:74px" width="6" height="28" viewBox="0 0 6 28" fill="#666"><path d="M1 1 L4.500 4 L1 7 Z M1 18.500 L4.500 21.500 L1 24.500 Z"/></svg>
<span class="t" style="left:75px;top:72px">已提取的 CAD 图层</span>
<span class="t" style="left:75px;top:90px">CAD 原始图层</span>
</div>
<!-- ===== STATUS BAR ===== -->
<div id="status" style="left:0;top:660px;width:1280px;height:27px;background:#fafafa;">
<span class="t" style="left:0;top:8px">层高：3.000</span>
<span class="t" style="left:76px;top:8px">底标高：-0.300</span>
<span class="t" style="left:168px;top:8px">选中图元：0</span>
<span class="t" style="left:259px;top:8px">隐藏图元：0</span>
<div class="sb" style="left:351px;top:3px;width:21px"></div>
<div class="sb on" style="left:375px;top:3px;width:29px"></div>
<div class="sb on" style="left:408px;top:3px;width:29px"></div>
<div class="sb" style="left:440px;top:3px;width:20px"></div>
<div class="sb" style="left:463px;top:3px;width:29px"></div>
<div class="sb" style="left:496px;top:3px;width:29px"></div>
<div class="sb on" style="left:528px;top:3px;width:30px"></div>
<div class="sb" style="left:561px;top:3px;width:20px"></div>
<div class="sb" style="left:584px;top:3px;width:20px"></div>
<div class="sb" style="left:607px;top:3px;width:20px"></div>
<div class="sb" style="left:631px;top:3px;width:83px"></div>
<span class="t" style="left:634px;top:8px">无工作平面</span>
<svg style="left:351px;top:3px" width="365" height="21" viewBox="0 0 365 21" fill="none" stroke="#555" stroke-width="1">
<path d="M6.500 6 V14.500 H15" stroke-width="1.200"/><path d="M9 12 H12" stroke-width=".8"/>
<rect x="28.500" y="5.500" width="11" height="10" rx="1.500" stroke="#3a5f9a"/><path d="M45 9.500 L47 12 L49 9.500 Z" fill="#333" stroke="none"/>
<path d="M62 7.500 L67.500 5 L73 7.500 V13.500 L67.500 16 L62 13.500 Z M62 7.500 L67.500 10 L73 7.500 M67.500 10 V16" stroke="#3a5f9a"/><path d="M78 9.500 L80 12 L82 9.500 Z" fill="#333" stroke="none"/>
<path d="M93 5 L105 16 M105 5 L93 16" stroke="#aaa"/>
<circle cx="121.500" cy="10.500" r="5" stroke="#666"/><path d="M121.500 10.500 H126.500 M121.500 10.500 V6" stroke="#666"/><path d="M133 9.500 L135 12 L137 9.500 Z" fill="#333" stroke="none"/>
<path d="M150 15.500 H164 M150 15.500 L161 5.500" stroke="#777"/><path d="M166 9.500 L168 12 L170 9.500 Z" fill="#333" stroke="none"/>
<path d="M181 8 H187 M184 5 V11" stroke="#2a6fd6" stroke-width="1.300"/><rect x="186" y="12" width="9" height="3.500" fill="#2a6fd6" stroke="none"/><path d="M199 9.500 L201 12 L203 9.500 Z" fill="#333" stroke="none"/>
<rect x="214.500" y="4.500" width="12" height="12" stroke="#3a5f9a"/><circle cx="220" cy="10" r="3" stroke="#2a6fd6"/><path d="M222 12 L225 15" stroke="#2a6fd6"/>
<rect x="237.500" y="4.500" width="4.500" height="12" rx="1" stroke="#3a5f9a"/><rect x="244.500" y="10.500" width="5" height="6" rx="1" stroke="#3a5f9a"/>
<path d="M260.500 16 V11 Q260.500 6 266 6 H270" stroke="#666"/><path d="M268 12 L271 14 L268 16 Z" fill="#333" stroke="none"/>
<path d="M355 9.500 L357 12 L359 9.500 Z" fill="#333" stroke="none"/>
</svg>
</div>
<!-- ===== TASKBAR ===== -->
<div id="task" style="left:0;top:687px;width:1280px;height:31px;background:#1d2239;">
<svg style="left:12px;top:9px" width="14" height="14" viewBox="0 0 14 14" fill="#f4f6ff"><path d="M0 2 L6 1.100 V6.500 H0 Z M7 1 L14 0 V6.500 H7 Z M0 7.500 H6 V12.900 L0 12 Z M7 7.500 H14 V14 L7 13 Z"/></svg>
<div style="left:39px;top:0;width:288px;height:31px;background:#f4f4f8"></div>
<svg style="left:49px;top:8px" width="16" height="16" viewBox="0 0 16 16" fill="none" stroke="#222" stroke-width="1.300"><circle cx="9" cy="6.500" r="4.200"/><path d="M6 9.700 L1.500 14.200"/></svg>
<span class="t" style="left:72px;top:8px;font-size:12.800px;height:16px;line-height:16px;color:#222">在此键入进行搜索</span>
<!-- task view -->
<svg style="left:338px;top:9px" width="16" height="14" viewBox="0 0 16 14" fill="none" stroke="#e8e8f0" stroke-width="1.200"><path d="M1 3.500 H10 V10.500 H1 M1 1 V13 M13 1 V4 M13 6 V8 M13 10 V13 M10 1 V3.500 M10 10.500 V13" /></svg>
<!-- search -->
<svg style="left:379px;top:5px" width="22" height="22" viewBox="0 0 22 22" fill="none"><circle cx="12.500" cy="8.500" r="5" stroke="#ff8a1f" stroke-width="3"/><path d="M8.500 12.500 L3 18.500" stroke="#ff8a1f" stroke-width="3.400" stroke-linecap="round"/></svg>
<!-- green C -->
<svg style="left:420px;top:5px" width="22" height="22" viewBox="0 0 22 22"><rect x="1" y="1" width="20" height="20" rx="2" fill="#3fae2a"/><path d="M16 6 H9 Q6 6 6 9 V13 Q6 16 9 16 H16" fill="none" stroke="#fff" stroke-width="2.600"/></svg>
<!-- phone -->
<svg style="left:463px;top:4px" width="16" height="24" viewBox="0 0 16 24"><rect x="2" y="1" width="11" height="21" rx="2" fill="#7c9fdc"/><rect x="4" y="4" width="7" height="12" fill="#a8c4f0"/><rect x="10" y="2" width="4" height="20" fill="#5a7cc0" opacity=".6"/></svg>
<!-- rabbit -->
<svg style="left:503px;top:5px" width="22" height="22" viewBox="0 0 22 22"><rect x="1" y="1" width="20" height="20" rx="2" fill="#e8232d"/><path d="M5 3.500 L9 10 H13 L17 3.500 L16.500 11 Q18.500 13 18 16 Q17 18.500 11 18.500 Q5 18.500 4 16 Q3.500 13 5.500 11 Z" fill="#fff"/><circle cx="8" cy="14.500" r="1" fill="#e8232d"/><circle cx="14" cy="14.500" r="1" fill="#e8232d"/></svg>
<!-- gray I -->
<svg style="left:543px;top:5px" width="22" height="22" viewBox="0 0 22 22"><rect x="1" y="1" width="20" height="20" rx="3" fill="#c7cbd1"/><path d="M6 5 H16 V8 H12.500 V14 H16 V17 H6 V14 H9.500 V8 H6 Z" fill="#5f8fb8"/></svg>
<!-- folder -->
<svg style="left:584px;top:6px" width="24" height="20" viewBox="0 0 24 20"><path d="M1 3 H9 L11 5 H23 V18 H1 Z" fill="#f5b92e"/><path d="M1 8 H23 V18 H1 Z" fill="#fbd86a"/><rect x="8" y="12" width="8" height="6" fill="#4a90d9"/></svg>
<!-- WPS -->
<svg style="left:627px;top:7px" width="22" height="18" viewBox="0 0 22 18" fill="none" stroke="#e8322d" stroke-width="2.800" stroke-linejoin="miter"><path d="M1.500 3 L5.500 14 L9 6 L12 14 L15.500 5.500 L17.500 10 L20.500 3"/></svg>
<!-- CAD -->
<svg style="left:667px;top:4px" width="24" height="24" viewBox="0 0 24 24"><rect x="1" y="2" width="22" height="20" rx="3" fill="#2a5fb0" stroke="#8fb2e8"/><text x="12" y="16" font-size="8" font-family="Liberation Sans, sans-serif" fill="#cfe0ff" text-anchor="middle" font-weight="bold">CAD</text></svg>
<!-- teal I -->
<svg style="left:709px;top:5px" width="22" height="22" viewBox="0 0 22 22"><rect x="1" y="1" width="20" height="20" rx="4" fill="#d8f4f2"/><path d="M6 5 H16 V8 H12.500 V14 H16 V17 H6 V14 H9.500 V8 H6 Z" fill="#2bb5a8"/></svg>
<!-- blue cube -->
<svg style="left:750px;top:5px" width="22" height="22" viewBox="0 0 22 22"><path d="M11 2 L20 6.500 V15.500 L11 20 L2 15.500 V6.500 Z" fill="#1d7ff0"/><path d="M11 8 L16 10.500 V15 L11 17.500 L6 15 V10.500 Z" fill="#0b3f9a"/><path d="M2 6.500 L11 11 L20 6.500" stroke="#5fb0ff" fill="none"/></svg>
<!-- active orange C -->
<div style="left:783px;top:0;width:41px;height:31px;background:#393e54"></div>
<svg style="left:792px;top:5px" width="22" height="22" viewBox="0 0 22 22"><rect x="1" y="1" width="20" height="20" rx="2" fill="#f0503a"/><path d="M16 6 H9 Q6 6 6 9 V13 Q6 16 9 16 H16" fill="none" stroke="#fff" stroke-width="2.600"/></svg>
<!-- tray -->
<svg style="left:1150px;top:7px" width="130" height="18" viewBox="0 0 130 18" fill="none" stroke="#f0f0f4" stroke-width="1.200">
<path d="M4 11 L8.500 6.500 L13 11"/>
<rect x="26" y="2" width="5" height="9" rx="2.500" fill="#dfe2ea" stroke="none"/><path d="M24.500 9 Q24.500 13 28.500 13 Q32.500 13 32.500 9 M28.500 13 V16" stroke="#b8bcc8"/>
<rect x="66.500" y="3.500" width="11" height="11" fill="#f0f0f4" stroke="none"/>
<path d="M98.500 3.500 H110.500 V12.500 H106 L104.500 15 L103 12.500 H98.500 Z"/>
<path d="M127.500 0 V18" stroke="#888" stroke-width=".8"/>
</svg>
<span class="t" style="left:1190px;top:8px;font-size:13px;height:16px;line-height:16px;color:#fff;font-weight:bold">中</span>
<span class="t" style="left:1217px;top:11px;font-size:9px;height:10px;line-height:10px;color:#1c2038;font-weight:bold">拼</span>
</div>
</body>
</html>
